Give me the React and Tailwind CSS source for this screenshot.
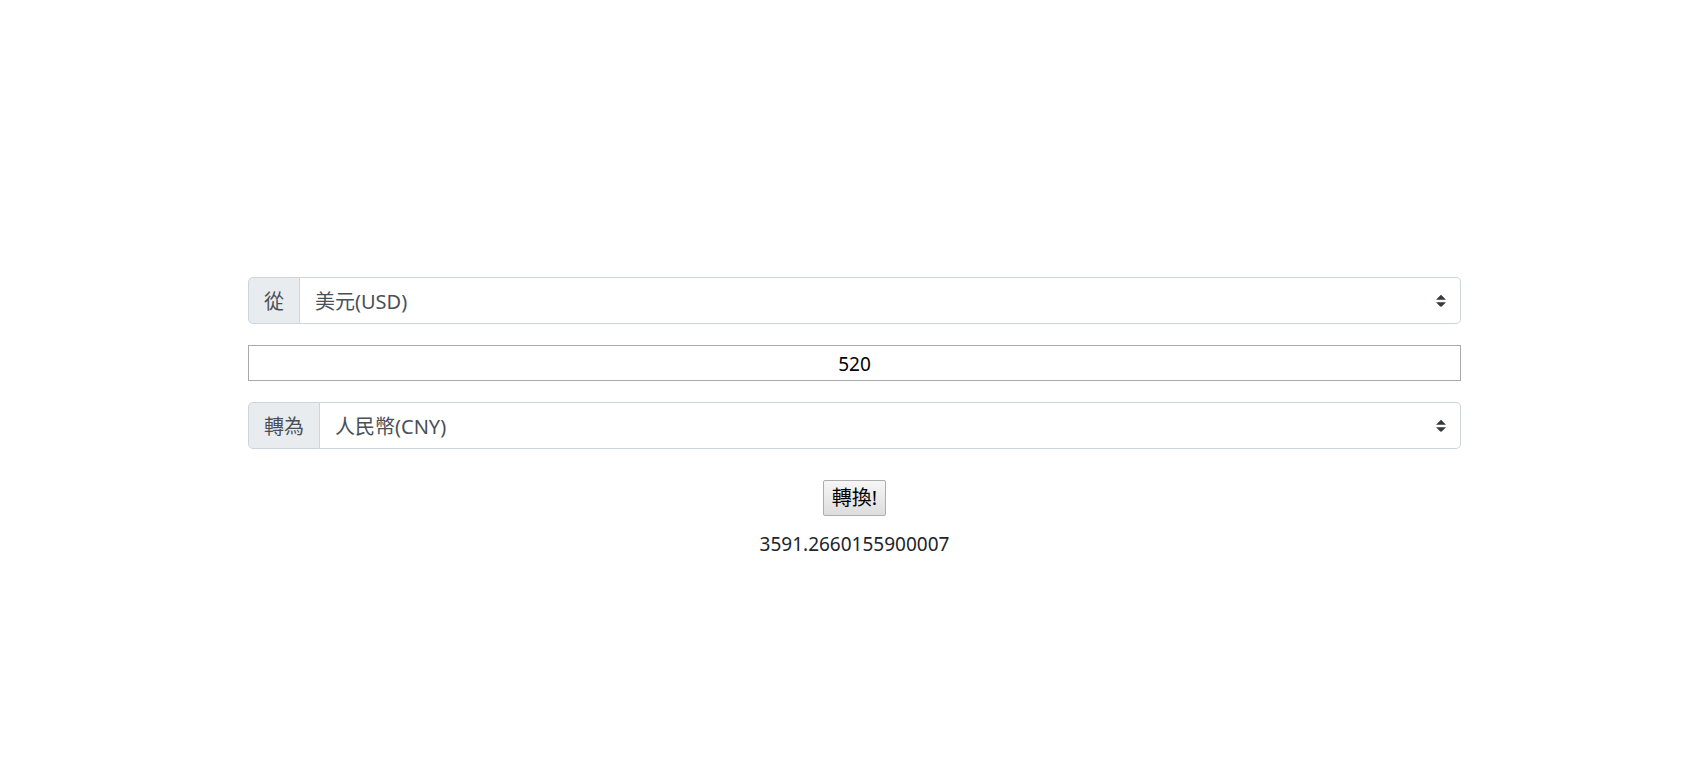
import React, { useState } from "react";

const font = { fontFamily: '"Segoe UI", "Noto Sans", "Noto Sans CJK TC", sans-serif' };

function Arrows() {
    return (
        <svg viewBox="0 0 4 5" className="pointer-events-none absolute right-[15px] top-1/2 h-[12.5px] w-[10px] -translate-y-1/2">
            <path d="M2 0L0 2h4zm0 5L0 3h4z" fill="#343a40" />
        </svg>
    );
}

function SelectGroup({ label, value, options, onChange }) {
    return (
        <div className="flex h-[47px] w-full">
            <span className="flex items-center rounded-l-[5px] border border-[#ced4da] bg-[#e9ecef] px-[15px] pt-[3px] text-[20px] text-[#495057]">
                {label}
            </span>
            <div className="relative flex-1">
                <select
                    value={value}
                    onChange={(e) => onChange(e.target.value)}
                    className="h-full w-full appearance-none rounded-r-[5px] border border-l-0 border-[#ced4da] bg-white pl-[15px] pr-[40px] pt-[3px] text-[20px] text-[#495057] outline-none"
                    style={font}
                >
                    {options.map((o) => (
                        <option key={o.code} value={o.code}>
                            {o.name}({o.code})
                        </option>
                    ))}
                </select>
                <Arrows />
            </div>
        </div>
    );
}

const currencies = [
    { code: "USD", name: "美元" },
    { code: "CNY", name: "人民幣" },
    { code: "TWD", name: "新台幣" },
    { code: "JPY", name: "日圓" },
];

export default function App() {
    const [from, setFrom] = useState("USD");
    const [to, setTo] = useState("CNY");
    const [amount, setAmount] = useState("520");

    return (
        <div className="min-h-screen bg-white pt-[277px]" style={font}>
            <div className="ml-[248px] flex w-[1213px] flex-col">
                <SelectGroup label="從" value={from} options={currencies} onChange={setFrom} />
                <input
                    value={amount}
                    onChange={(e) => setAmount(e.target.value)}
                    className="mt-[21px] h-[36px] w-full border border-[#a9a9a9] pt-[1px] text-center text-[19px] text-black outline-none"
                    style={font}
                />
                <div className="mt-[21px]">
                    <SelectGroup label="轉為" value={to} options={currencies} onChange={setTo} />
                </div>
                <div className="mt-[31px] flex justify-center">
                    <button
                        className="h-[36px] rounded-[2px] border border-[#adadad] bg-gradient-to-b from-[#f6f6f6] to-[#dddddd] px-[8px] text-[20px] text-black"
                        style={font}
                    >
                        轉換!
                    </button>
                </div>
                <div className="mt-[13px] text-center text-[19px] leading-[30px] text-[#212529]">3591.2660155900007</div>
            </div>
        </div>
    );
}
